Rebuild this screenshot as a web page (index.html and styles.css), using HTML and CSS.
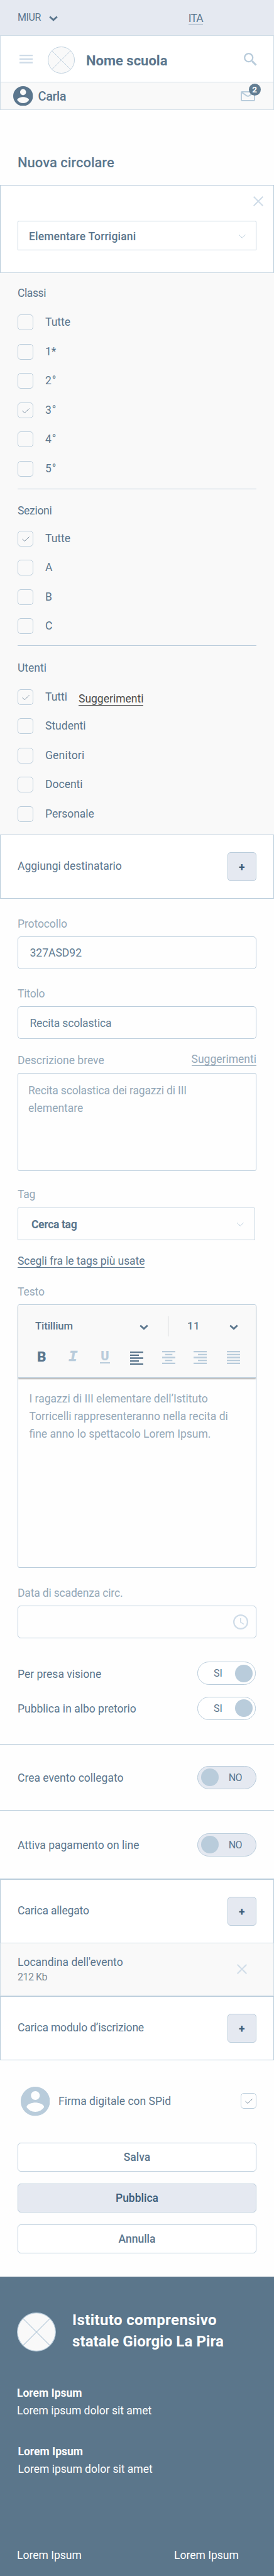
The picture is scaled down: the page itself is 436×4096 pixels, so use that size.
FILE: index.html
```html
<!DOCTYPE html>
<html lang="it">
<head>
<meta charset="utf-8">
<title>Nuova circolare</title>
<link rel="stylesheet" href="styles.css">
</head>
<body>
<svg class="defs" width="0" height="0">
  <symbol id="chev" viewBox="0 0 14 9"><path d="M1.2 1.5 7 6.8l5.800-5.300" fill="none" stroke="currentColor" stroke-width="2.800"/></symbol>
  <symbol id="chev-thin" viewBox="0 0 14 9"><path d="M1.200 1.500 7 7l5.800-5.500" fill="none" stroke="currentColor" stroke-width="1.100"/></symbol>
  <symbol id="close" viewBox="0 0 16 16"><path d="M.7.7l14.600 14.600M15.300.7.7 15.300" fill="none" stroke="currentColor" stroke-width="2"/></symbol>
  <symbol id="user" viewBox="2 2 20 20"><path fill="currentColor" d="M12 2C6.480 2 2 6.480 2 12s4.480 10 10 10 10-4.480 10-10S17.520 2 12 2zm0 3c1.660 0 3 1.340 3 3s-1.340 3-3 3-3-1.340-3-3 1.340-3 3-3zm0 14.200c-2.500 0-4.710-1.280-6-3.220.03-1.990 4-3.080 6-3.080 1.990 0 5.970 1.090 6 3.080-1.290 1.940-3.500 3.220-6 3.220z"/></symbol>
  <symbol id="tick" viewBox="0 0 12 8"><path d="M.5 4.200 4.200 7.500 11.600.5" fill="none" stroke="#6f8598" stroke-width=".9"/></symbol>
  <symbol id="logo" viewBox="0 0 43 43"><circle cx="21.500" cy="21.500" r="21" fill="#f9f9f9" stroke="#b9ccdb" stroke-width=".9"/><path d="M6.700 6.700l29.700 29.700M36.400 6.700 6.700 36.400" stroke="#b9ccdb" stroke-width=".9"/></symbol>
</svg>

<div class="topbar">
  <span class="ministry">MIUR</span>
  <svg class="chev"><use href="#chev"/></svg>
  <a class="lang">ITA</a>
</div>

<header class="header">
  <svg class="burger" viewBox="0 0 21 14"><path d="M0 1.200h21M0 6.900h21M0 12.500h21" stroke="#cfdce8" stroke-width="2.300"/></svg>
  <svg class="logo"><use href="#logo"/></svg>
  <h1 class="school">Nome scuola</h1>
  <svg class="search" viewBox="0 0 21 21"><circle cx="7.700" cy="7.700" r="6.500" fill="none" stroke="#b9ccdb" stroke-width="2.300"/><path d="M13.100 13.100l6.400 6.400" stroke="#b9ccdb" stroke-width="3"/></svg>
</header>

<div class="userbar">
  <svg class="avatar"><use href="#user"/></svg>
  <span class="username">Carla</span>
  <span class="mail">
    <svg class="mail-icon" viewBox="0 0 23 16"><rect x="1" y="1" width="21" height="14" rx="1" fill="none" stroke="#b9ccdb" stroke-width="2"/><path d="M2 2.200 9.700 7.300q1.800 1 3.600 0L21 2.200" fill="none" stroke="#b9ccdb" stroke-width="2"/></svg>
    <span class="badge">2</span>
  </span>
</div>

<h2 class="title">Nuova circolare</h2>

<section class="school-box">
  <svg class="close"><use href="#close"/></svg>
  <div class="select semi">Elementare Torrigiani<svg class="chev thin"><use href="#chev-thin"/></svg></div>
</section>

<section class="recipients">
  <div class="group classes">
    <h3>Classi</h3>
    <ul>
      <li><i class="cb"></i>Tutte</li>
      <li><i class="cb"></i><span class="num one">1*</span></li>
      <li><i class="cb"></i><span class="num">2°</span></li>
      <li><i class="cb"><svg><use href="#tick"/></svg></i><span class="num">3°</span></li>
      <li><i class="cb"></i><span class="num">4°</span></li>
      <li><i class="cb"></i><span class="num">5°</span></li>
    </ul>
  </div>
  <div class="group sections">
    <h3>Sezioni</h3>
    <ul>
      <li><i class="cb"><svg><use href="#tick"/></svg></i>Tutte</li>
      <li><i class="cb"></i>A</li>
      <li><i class="cb"></i>B</li>
      <li><i class="cb"></i>C</li>
    </ul>
  </div>
  <div class="group users">
    <h3>Utenti</h3>
    <ul>
      <li><i class="cb"><svg><use href="#tick"/></svg></i>Tutti<a class="hint dark">Suggerimenti</a></li>
      <li><i class="cb"></i>Studenti</li>
      <li><i class="cb"></i><span class="wide">Genitori</span></li>
      <li><i class="cb"></i>Docenti</li>
      <li><i class="cb"></i>Personale</li>
    </ul>
  </div>
</section>

<section class="add-row"><span>Aggiungi destinatario</span><button class="plus">+</button></section>

<form class="form">
  <label class="lb-protocol">Protocollo</label>
  <div class="input">327ASD92</div>
  <label class="lb-title">Titolo</label>
  <div class="input tight">Recita scolastica</div>
  <label class="lb-desc">Descrizione breve<a class="hint">Suggerimenti</a></label>
  <div class="textarea"><span class="tight">Recita scolastica dei ragazzi di III</span><br>elementare</div>
  <label class="lb-tag">Tag</label>
  <div class="select tag">Cerca tag<svg class="chev thin"><use href="#chev-thin"/></svg></div>
  <a class="pick">Scegli fra le tags più usate</a>
  <label class="lb-text">Testo</label>
  <div class="editor">
    <div class="toolbar">
      <div class="fonts">
        <span class="family">Titillium<svg class="chev"><use href="#chev"/></svg></span>
        <span class="size"><span class="size-val">11</span><svg class="chev"><use href="#chev"/></svg></span>
      </div>
      <div class="tools">
        <b class="tool-b">B</b>
        <b class="tool-i">I</b>
        <b class="tool-u">U</b>
        <svg class="al left" viewBox="0 0 21 21"><path d="M0 1.200h21M0 10.500h21M0 19.800h21M0 5.800h14M0 15.200h14"/></svg>
        <svg class="al center" viewBox="0 0 21 21"><path d="M0 1.200h21M0 10.500h21M0 19.800h21M4.700 5.800h11.600M4.700 15.200h11.600"/></svg>
        <svg class="al right" viewBox="0 0 21 21"><path d="M0 1.200h21M0 10.500h21M0 19.800h21M7 5.800h14M7 15.200h14"/></svg>
        <svg class="al justify" viewBox="0 0 21 21"><path d="M0 1.200h21M0 10.500h21M0 19.800h21M0 5.800h21M0 15.200h21"/></svg>
      </div>
    </div>
    <p class="body-text">I ragazzi di III elementare dell’Istituto<br>Torricelli rappresenteranno nella recita di<br>fine anno lo spettacolo Lorem Ipsum.</p>
  </div>
  <label class="lb-date tight">Data di scadenza circ.</label>
  <div class="input date"><svg class="clock" viewBox="0 0 24 24"><circle cx="12" cy="12" r="10.900" fill="none" stroke="#cfdce8" stroke-width="2.200"/><path d="M11.800 6v6.400l5.300 3.200" fill="none" stroke="#cfdce8" stroke-width="1.600"/></svg></div>
  <div class="switch-row first"><span>Per presa visione</span><span class="switch on">SI<i></i></span></div>
  <div class="switch-row second"><span>Pubblica in albo pretorio</span><span class="switch on">SI<i></i></span></div>
</form>

<section class="switch-row band"><span>Crea evento collegato</span><span class="switch"><i></i>NO</span></section>
<section class="switch-row band last"><span>Attiva pagamento on line</span><span class="switch"><i></i>NO</span></section>

<section class="add-row attach"><span class="tight">Carica allegato</span><button class="plus">+</button></section>
<section class="file">
  <div><div class="file-name">Locandina dell'evento</div><div class="file-size">212 Kb</div></div>
  <svg class="close"><use href="#close"/></svg>
</section>
<section class="add-row module"><span class="tight">Carica modulo d’iscrizione</span><button class="plus">+</button></section>

<section class="sign">
  <svg class="avatar-lg"><use href="#user"/></svg>
  <span>Firma digitale con SPid</span>
  <i class="cb"><svg><use href="#tick"/></svg></i>
</section>

<div class="actions">
  <button class="btn">Salva</button>
  <button class="btn primary">Pubblica</button>
  <button class="btn">Annulla</button>
</div>

<footer class="footer">
  <div class="brand">
    <svg class="logo"><use href="#logo"/></svg>
    <div class="brand-name"><span class="l1">Istituto comprensivo</span><br>statale Giorgio La Pira</div>
  </div>
  <div class="info"><b>Lorem Ipsum</b><br>Lorem ipsum dolor sit amet</div>
  <div class="info shifted"><b>Lorem Ipsum</b><br>Lorem ipsum dolor sit amet</div>
  <div class="links"><a>Lorem Ipsum</a><a>Lorem Ipsum</a></div>
</footer>
</body>
</html>
```
FILE: styles.css
```css
* { box-sizing: border-box; }
body {
  margin: 0;
  width: 436px;
  background: #fefefe;
  color: #5b768d;
  font: 17.5px/24px Roboto, "Liberation Sans", sans-serif;
}
h1, h2, h3, p, ul { margin: 0; padding: 0; font-weight: 400; font-size: inherit; }
ul { list-style: none; }
svg { display: block; flex: none; }
.defs { position: absolute; }
button { padding: 0; font: inherit; color: inherit; }
.tight { letter-spacing: -0.17px; }
.chev { width: 14px; height: 9px; color: #5b768d; }
.chev.thin { color: #b9ccdb; width: 12.5px; height: 8px; }
.close { width: 16px; height: 16px; color: #cfdce8; }

/* Top bars */
.topbar { height: 56px; background: #e5e9f1; display: flex; align-items: flex-start; padding: 16px 0 0 28px; }
.ministry { font-size: 16px; letter-spacing: -0.43px; }
.topbar .chev { margin: 9px 0 0 13px; }
.lang { font-size: 17.5px; letter-spacing: -0.9px; margin: 3px 0 0 208px; line-height: 20px; border-bottom: 1px solid #8fa6b9; }
.header { height: 74px; background: #fff; border: 1px solid #cfdce6; border-bottom: 0; display: flex; align-items: center; padding: 3px 26px 0 30px; }
.burger { width: 21px; height: 14px; margin-top: -2px; }
.header .logo { width: 43px; height: 43px; margin-left: 24px; }
.school { font-size: 22px; font-weight: 700; line-height: 28px; margin: 3px 0 0 18px; }
.search { width: 21px; height: 21px; margin: -2px 0 0 auto; }
.userbar { height: 45px; background: #f9f9f9; border: 1px solid #cfdce6; display: flex; align-items: center; padding-left: 20px; }
.avatar { width: 31.500px; height: 31.500px; }
.username { font-size: 20px; font-weight: 500; letter-spacing: -0.43px; margin-left: 8px; }
.mail { position: relative; margin: 0 29px 0 auto; }
.mail-icon { width: 23px; height: 16px; }
.badge { position: absolute; left: 12.500px; top: -12px; width: 19px; height: 19px; border-radius: 50%; background: #627d92; color: #fff; font-size: 13.500px; font-weight: 700; line-height: 19px; text-align: center; }
.title { height: 119px; padding: 70px 0 0 28px; font-size: 22px; font-weight: 500; line-height: 28px; }

/* School selector */
.school-box { height: 140px; background: #fff; border: 1px solid #b9ccdb; border-bottom-color: #cfdce6; padding: 17px 0 0 27px; }
.school-box .close { margin-left: 374.500px; }
.select { width: 380px; height: 46px; border: 1px solid #c6d5e1; border-radius: 2px 2px 0 0; display: flex; align-items: center; justify-content: space-between; padding: 2px 16px 0 17px; }
.school-box .select { margin-top: 23px; height: 47px; }
.semi { font-weight: 500; letter-spacing: 0.16px; }

/* Recipient groups */
.recipients { height: 893px; background: #f9f9f9; padding: 0 28px; }
.group { border-bottom: 1px solid #b9ccdb; }
.classes { height: 344px; padding-top: 20px; }
.sections { height: 249px; padding-top: 21.500px; }
.users { height: 300px; padding-top: 22.500px; border: 0; }
.classes h3 { letter-spacing: -0.4px; }
.sections h3 { letter-spacing: -0.3px; }
.group ul { display: grid; gap: 21.530px; margin-top: 22px; }
.sections ul { margin-top: 20px; }
.group li { height: 25px; line-height: 25px; display: flex; }
.cb { width: 25px; height: 25px; flex: none; border: 1.500px solid #b9ccdb; border-radius: 5px; margin-right: 19px; display: flex; align-items: center; justify-content: center; }
.cb svg { width: 12px; height: 8px; margin-top: 1px; }
.num { letter-spacing: 1px; }
.one { letter-spacing: 0; }
.wide { letter-spacing: 0.2px; }
.hint { line-height: 20px; height: 21px; border-bottom: 1px solid #94a8b8; }
.hint.dark { color: #4a4a4a; border-color: #4a4a4a; margin: 5px 0 0 18px; }

/* Rows with an add button */
.add-row { height: 102px; background: #fff; border: 1px solid #b9ccdb; display: flex; align-items: center; justify-content: space-between; padding: 0 27px; }
.add-row span { padding-bottom: 3px; }
.plus { width: 46.500px; height: 46px; border: 1px solid #b9ccdb; border-radius: 5px; background: #e5e9f1; color: #3b5c78; font-weight: 700; padding-top: 2px; }

/* Form */
.form { height: 1345px; border-bottom: 1px solid #b9ccdb; padding: 27.500px 28px 0; }
.form label { display: flex; justify-content: space-between; height: 24px; color: #94a8b8; }
.input { height: 52px; border: 1px solid #b9ccdb; border-radius: 5px; padding: 1px 12px 0 18.500px; display: flex; align-items: center; color: #647f95; line-height: 26px; }
.form .lb-protocol { margin: 0 0 8.300px; letter-spacing: -0.1px; }
.form .lb-title { margin: 27px 0 8.300px; letter-spacing: -0.2px; }
.form .lb-desc { margin: 21.700px 0 8.200px; }
.textarea { height: 156px; border: 1px solid #b9ccdb; border-radius: 3px; padding: 13.500px 16px; line-height: 28px; color: #94a8b8; }
.form .lb-tag { margin: 25.500px 0 8.300px; letter-spacing: -0.2px; }
.select.tag { width: 377.500px; height: 52px; padding-left: 21px; font-weight: 700; letter-spacing: -0.33px; }
.pick { display: block; width: 202px; line-height: 20px; height: 21px; margin: 23.700px 0 0; border-bottom: 1px solid #5b768d; letter-spacing: -0.08px; white-space: nowrap; }
.form .lb-text { margin: 26px 0 7.800px; letter-spacing: -0.1px; }

/* Rich text editor */
.editor { height: 419px; border: 1px solid #b9ccdb; border-radius: 3px; color: #94a8b8; }
.toolbar { height: 115.500px; background: #f9f9f9; border-bottom: 1px solid #b9ccdb; box-shadow: 0 2px 2px rgba(0,0,0,.28); border-radius: 2px 2px 0 0; color: #5b768d; }
.fonts { display: flex; padding-top: 18px; height: 73px; font-size: 16.700px; font-weight: 500; line-height: 30px; }
.family { width: 239px; height: 32px; border-right: 1px solid #d2d5d8; padding: 0 31px 0 27px; display: flex; justify-content: space-between; align-items: center; letter-spacing: -0.1px; }
.size { display: flex; align-items: center; justify-content: space-between; width: 111px; height: 32px; padding-left: 30px; }
.size-val { letter-spacing: 0.64px; }
.fonts .chev { margin-top: 2px; }
.tools { display: grid; grid-template-columns: 50px 50px 47.500px 51.500px 50px 52.500px 21px; margin-left: 30px; align-items: start; height: 24px; }
.tool-b { font: 900 22.500px/20px Roboto, sans-serif; margin-top: -1px; }
.tool-i { font: italic 700 23.500px/20px "Liberation Mono", monospace; color: #b9ccdb; -webkit-text-stroke: 0.6px #b9ccdb; }
.tool-u { font: 900 20px/16.500px Roboto, sans-serif; color: #b9ccdb; width: 16px; height: 20px; text-align: center; border-bottom: 2px solid #b9ccdb; }
.al { width: 21px; height: 21px; fill: none; stroke: #b9ccdb; stroke-width: 2.300; }
.al.left { stroke: #5b768d; margin-top: 1px; }
.body-text { line-height: 28px; padding: 19.500px 0 0 17.500px; white-space: nowrap; }
.form .lb-date { margin: 27.700px 0 7.800px; }
.input.date { justify-content: flex-end; }
.clock { width: 24px; height: 24px; }

/* Switches */
.switch-row { display: flex; align-items: center; justify-content: space-between; }
.switch-row > span:first-child { padding-top: 2px; }
.first { margin-top: 37.300px; }
.second { margin-top: 18.800px; }
.switch { width: 94px; height: 37px; border: 1px solid #b9ccdb; border-radius: 19px; background: #e5e9f1; display: flex; align-items: center; justify-content: space-between; padding: 1px 22px 0 4.500px; font-size: 16px; letter-spacing: -0.6px; }
.switch i { width: 28px; height: 28px; border-radius: 50%; background: #b9ccdb; margin-top: -1px; }
.switch.on { background: #fff; width: 92.500px; margin-right: 1.500px; padding: 1px 3.500px 0 25px; letter-spacing: 0; }
.band { height: 105px; border-bottom: 1px solid #b9ccdb; padding: 0 28px; }
.band.last { height: 108px; border: 0; }

/* Attachments */
.attach { height: 102px; border-top-width: 2px; border-bottom: 0; }
.file { height: 85px; background: #f9f9f9; border: 1px solid #cfdce6; display: flex; justify-content: space-between; padding: 18px 42px 0 27px; }
.file-size { font-size: 16px; letter-spacing: -0.5px; color: #7b8a96; }
.file .close { margin-top: 15px; }
.module { height: 102px; }

/* Signature and actions */
.sign { height: 130.500px; padding: 42px 28px 0 32.500px; display: flex; }
.avatar-lg { width: 46.500px; height: 46.500px; color: #b9ccdb; }
.sign span { margin: 10.500px 0 0 14px; }
.sign .cb { margin: 10px 0 0 auto; }
.actions { height: 213.500px; padding: 0 28px; display: flex; flex-direction: column; gap: 19px; }
.btn { height: 46px; border: 1px solid #b9ccdb; border-radius: 5px; background: #fff; font-weight: 500; padding-top: 1px; }
.btn.primary { background: #e5e9f1; color: #3b5c78; }

/* Footer */
.footer { height: 476px; background: #5b768b; color: #fff; padding: 57px 27px 0; line-height: 28px; }
.brand { display: flex; height: 113.500px; }
.brand .logo { width: 62px; height: 62px; }
.brand-name { margin: -5px 0 0 26px; font-size: 24px; font-weight: 700; line-height: 34px; letter-spacing: 0.09px; }
.l1 { letter-spacing: 0.39px; }
.info { height: 93.500px; }
.shifted { padding-left: 1.500px; }
.links { display: grid; grid-template-columns: 250px 1fr; padding-top: 71.500px; }
```
